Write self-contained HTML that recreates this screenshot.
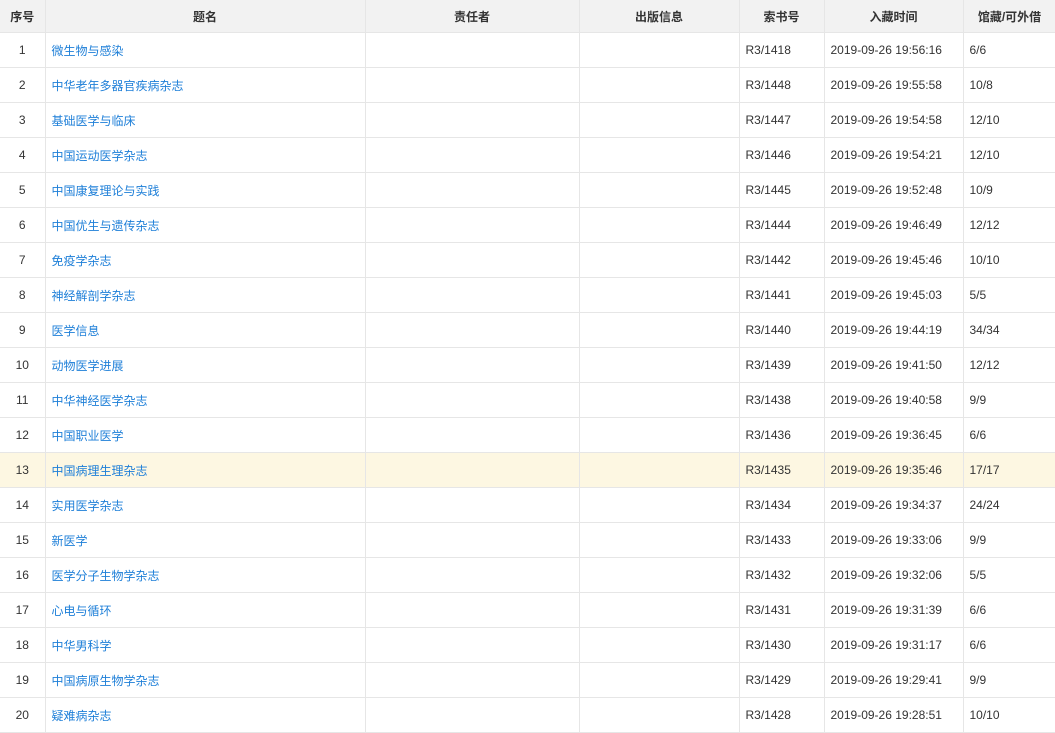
<!DOCTYPE html>
<html><head><meta charset="utf-8"><style>
body{margin:0;background:#fff;width:1055px;height:732px;overflow:hidden;font-family:"Liberation Sans","Noto Sans CJK SC",sans-serif;font-size:12px;color:#333}
table{border-collapse:collapse;table-layout:fixed;width:1056px}
td,th{border:1px solid #e6e6e6;height:34px;padding:0 6px;white-space:nowrap;overflow:hidden}
th{height:32px;background:#f2f2f2;font-weight:bold;text-align:center;border-top:none}
td:first-child,th:first-child{border-left:none;text-align:center;padding:0}
td:nth-child(2){color:#1e7fd8}
tr.h td{background:#fdf7e2}
</style></head><body>
<table>
<colgroup><col style="width:45px"><col style="width:320px"><col style="width:214px"><col style="width:160px"><col style="width:85px"><col style="width:139px"><col style="width:93px"></colgroup>
<tr><th>序号</th><th>题名</th><th>责任者</th><th>出版信息</th><th>索书号</th><th>入藏时间</th><th>馆藏/可外借</th></tr>
<tr><td>1</td><td>微生物与感染</td><td></td><td></td><td>R3/1418</td><td>2019-09-26 19:56:16</td><td>6/6</td></tr>
<tr><td>2</td><td>中华老年多器官疾病杂志</td><td></td><td></td><td>R3/1448</td><td>2019-09-26 19:55:58</td><td>10/8</td></tr>
<tr><td>3</td><td>基础医学与临床</td><td></td><td></td><td>R3/1447</td><td>2019-09-26 19:54:58</td><td>12/10</td></tr>
<tr><td>4</td><td>中国运动医学杂志</td><td></td><td></td><td>R3/1446</td><td>2019-09-26 19:54:21</td><td>12/10</td></tr>
<tr><td>5</td><td>中国康复理论与实践</td><td></td><td></td><td>R3/1445</td><td>2019-09-26 19:52:48</td><td>10/9</td></tr>
<tr><td>6</td><td>中国优生与遗传杂志</td><td></td><td></td><td>R3/1444</td><td>2019-09-26 19:46:49</td><td>12/12</td></tr>
<tr><td>7</td><td>免疫学杂志</td><td></td><td></td><td>R3/1442</td><td>2019-09-26 19:45:46</td><td>10/10</td></tr>
<tr><td>8</td><td>神经解剖学杂志</td><td></td><td></td><td>R3/1441</td><td>2019-09-26 19:45:03</td><td>5/5</td></tr>
<tr><td>9</td><td>医学信息</td><td></td><td></td><td>R3/1440</td><td>2019-09-26 19:44:19</td><td>34/34</td></tr>
<tr><td>10</td><td>动物医学进展</td><td></td><td></td><td>R3/1439</td><td>2019-09-26 19:41:50</td><td>12/12</td></tr>
<tr><td>11</td><td>中华神经医学杂志</td><td></td><td></td><td>R3/1438</td><td>2019-09-26 19:40:58</td><td>9/9</td></tr>
<tr><td>12</td><td>中国职业医学</td><td></td><td></td><td>R3/1436</td><td>2019-09-26 19:36:45</td><td>6/6</td></tr>
<tr class="h"><td>13</td><td>中国病理生理杂志</td><td></td><td></td><td>R3/1435</td><td>2019-09-26 19:35:46</td><td>17/17</td></tr>
<tr><td>14</td><td>实用医学杂志</td><td></td><td></td><td>R3/1434</td><td>2019-09-26 19:34:37</td><td>24/24</td></tr>
<tr><td>15</td><td>新医学</td><td></td><td></td><td>R3/1433</td><td>2019-09-26 19:33:06</td><td>9/9</td></tr>
<tr><td>16</td><td>医学分子生物学杂志</td><td></td><td></td><td>R3/1432</td><td>2019-09-26 19:32:06</td><td>5/5</td></tr>
<tr><td>17</td><td>心电与循环</td><td></td><td></td><td>R3/1431</td><td>2019-09-26 19:31:39</td><td>6/6</td></tr>
<tr><td>18</td><td>中华男科学</td><td></td><td></td><td>R3/1430</td><td>2019-09-26 19:31:17</td><td>6/6</td></tr>
<tr><td>19</td><td>中国病原生物学杂志</td><td></td><td></td><td>R3/1429</td><td>2019-09-26 19:29:41</td><td>9/9</td></tr>
<tr><td>20</td><td>疑难病杂志</td><td></td><td></td><td>R3/1428</td><td>2019-09-26 19:28:51</td><td>10/10</td></tr>
</table>
</body></html>
